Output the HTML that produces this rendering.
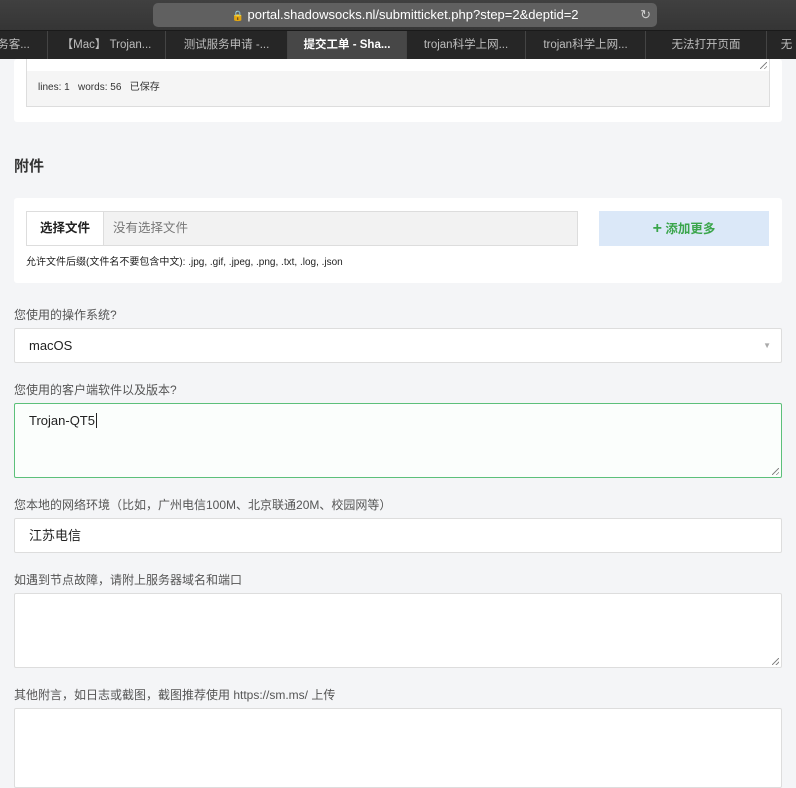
<!DOCTYPE html>
<html><head><meta charset="utf-8"><style>
*{box-sizing:border-box;margin:0;padding:0}
body{width:796px;height:773px;overflow:hidden;background:#f4f5f7;font-family:"Liberation Sans","Noto Sans CJK SC",sans-serif;position:relative;color:#333}
.a{position:absolute}
.top{left:0;top:0;width:796px;height:30px;background:linear-gradient(#404040,#353535)}
.addr{left:153px;top:3px;width:504px;height:24px;background:#606060;border-radius:5px;color:#fff;font-size:13px;text-align:center;line-height:24px}
.tabs{left:0;top:30px;width:796px;height:29px;background:#262626;border-top:1px solid #1a1a1a}
.tab{position:absolute;top:0;height:29px;line-height:29px;color:#bdbdbd;font-size:11.5px;text-align:center;border-left:1px solid #444}
.card{background:#fff;border-radius:3px}
.lbl{font-size:12px;color:#555;left:14px}
.box{background:#fff;border:1px solid #ddd;border-radius:2px;left:14px;width:768px;font-size:13px;color:#222;padding-left:14px}
.grip{position:absolute;right:2px;bottom:2px;width:7px;height:7px;background:linear-gradient(135deg,transparent 45%,#888 45%,#888 55%,transparent 55%,transparent 75%,#888 75%,#888 85%,transparent 85%)}
</style></head><body>
<div class="a top"></div>
<div class="a addr"><span style="font-size:10px">&#128274;</span> portal.shadowsocks.nl/submitticket.php?step=2&amp;deptid=2<span style="position:absolute;right:6px;color:#ccc">↻</span></div>
<div class="a tabs">
<div class="tab" style="left:-20px;width:67px;border:none">务客...</div>
<div class="tab" style="left:47px;width:118px">【Mac】 Trojan...</div>
<div class="tab" style="left:165px;width:122px">测试服务申请 -...</div>
<div class="tab" style="left:287px;width:119px;background:#474747;color:#fff;font-weight:bold">提交工单 - Sha...</div>
<div class="tab" style="left:406px;width:119px">trojan科学上网...</div>
<div class="tab" style="left:525px;width:120px">trojan科学上网...</div>
<div class="tab" style="left:645px;width:121px">无法打开页面</div>
<div class="tab" style="left:766px;width:40px">无</div>
</div>
<div class="a card" style="left:14px;top:59px;width:768px;height:63px"></div>
<div class="a" style="left:26px;top:59px;width:744px;height:13px;border:1px solid #ddd;border-top:none;background:#fff"><div class="grip"></div></div>
<div class="a" style="left:26px;top:71px;width:744px;height:36px;background:#f5f5f5;border:1px solid #ddd;border-top:none;font-size:10px;line-height:34px;padding-left:11px;color:#333">lines: 1 &nbsp; words: 56 &nbsp; 已保存</div>
<div class="a" style="left:14px;top:155px;font-size:15px;font-weight:bold;color:#333">附件</div>
<div class="a card" style="left:14px;top:198px;width:768px;height:85px"></div>
<div class="a" style="left:26px;top:211px;width:552px;height:35px;background:#f2f2f2;border:1px solid #ddd;font-size:12.5px;line-height:33px">
<span style="display:inline-block;width:77px;background:#fff;border-right:1px solid #ddd;text-align:center;color:#222;font-weight:bold">选择文件</span><span style="color:#777;padding-left:9px">没有选择文件</span></div>
<div class="a" style="left:599px;top:211px;width:170px;height:35px;background:#dbe8f8;color:#3aa54b;font-size:12.5px;font-weight:bold;text-align:center;line-height:35px"><span style="font-size:16px">+</span> 添加更多</div>
<div class="a" style="left:26px;top:253px;font-size:10px;color:#222">允许文件后缀(文件名不要包含中文): .jpg, .gif, .jpeg, .png, .txt, .log, .json</div>
<div class="a lbl" style="top:306px">您使用的操作系统?</div>
<div class="a box" style="top:328px;height:35px;line-height:33px">macOS<span style="position:absolute;right:10px;color:#aaa;font-size:8px">▼</span></div>
<div class="a lbl" style="top:381px">您使用的客户端软件以及版本?</div>
<div class="a box" style="top:403px;height:75px;border:1.5px solid #5cc07a;background:#fbfefc;padding-top:9px">Trojan-QT5<span style="border-left:1px solid #222;margin-left:1px"></span><div class="grip"></div></div>
<div class="a lbl" style="top:496px">您本地的网络环境（比如，广州电信100M、北京联通20M、校园网等）</div>
<div class="a box" style="top:518px;height:35px;line-height:33px">江苏电信</div>
<div class="a lbl" style="top:571px">如遇到节点故障，请附上服务器域名和端口</div>
<div class="a box" style="top:593px;height:75px"><div class="grip"></div></div>
<div class="a lbl" style="top:686px">其他附言，如日志或截图，截图推荐使用 https://sm.ms/ 上传</div>
<div class="a box" style="top:708px;height:80px"></div>
</body></html>
